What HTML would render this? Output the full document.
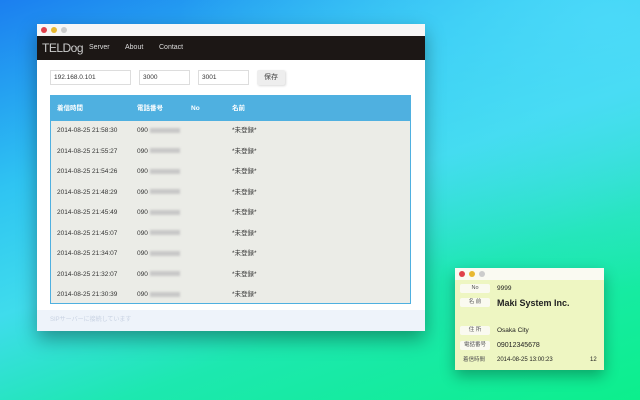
<!DOCTYPE html>
<html><head><meta charset="utf-8"><style>
*{margin:0;padding:0;box-sizing:border-box}
body{width:640px;height:400px;overflow:hidden;position:relative;font-family:"Liberation Sans","Noto Sans CJK JP",sans-serif;
background:linear-gradient(160deg,#1b7ff0 0%,#2fc4f2 30%,#3fdcec 50%,#1de8b0 70%,#0cef8c 100%);}
.bg2{position:absolute;inset:0;background:radial-gradient(ellipse at 95% 5%,rgba(80,220,250,.8),rgba(80,220,250,0) 50%)}
.win{position:absolute;left:37px;top:24px;width:388px;height:307px;background:#fff;box-shadow:0 8px 18px rgba(0,0,0,.35)}
.tb{height:12px;background:#f6f6f6;position:relative}
.dot{position:absolute;top:3px;width:6px;height:6px;border-radius:50%}
.nav{position:absolute;top:12px;left:0;right:0;height:24px;background:#1c1715;color:#ddd;font-size:7px}
.nav .b{position:absolute;left:5px;top:5px;font-size:12px;line-height:14px;color:#ccc;letter-spacing:-.5px}
.nav span{position:absolute;top:7px;line-height:10px}
.in{position:absolute;top:46px;height:15px;border:1px solid #ddd;font-size:6.5px;line-height:13px;padding:0 3px;color:#333;background:#fff}
.btn{position:absolute;top:46px;left:220px;width:28px;height:15px;background:#eee;border-radius:2px;font-size:7px;color:#444;text-align:center;line-height:15px;box-shadow:1px 1px 2px rgba(0,0,0,.15)}
.tbl{position:absolute;left:13px;top:71px;width:361px;height:209px;border:1px solid #4fb0e0;background:#ebece7}
.th{height:25px;background:#4fb0e0;color:#fff;font-size:6.5px;font-weight:bold;position:relative;line-height:25px}
.th span,.r span{position:absolute;top:0}
.r{height:20.5px;position:relative;font-size:6.5px;color:#333;line-height:20px}
.blur{display:inline-block;width:30px;height:5px;background:#c8c8c8;filter:blur(1px);vertical-align:middle}
.ft{position:absolute;left:0;right:0;top:286px;height:21px;background:#eef3fa;font-size:6px;line-height:21px;color:#c8d2e2;padding:0 13px}
.sw{position:absolute;left:455px;top:268px;width:149px;height:102px;background:#eef6c2;box-shadow:0 6px 14px rgba(0,0,0,.3);font-size:6.5px;color:#222}
.sw .tb{background:#fafaf2}
.lab{position:absolute;left:5px;width:30px;height:9px;background:#fafaf0;border-radius:2px;font-size:5.5px;text-align:center;line-height:9px;color:#555}
.v{position:absolute;left:42px;line-height:10px}
</style></head><body><div class="bg2"></div>
<div class="win">
<div class="tb"><div class="dot" style="left:4px;background:#e0404a"></div><div class="dot" style="left:14px;background:#e8b830"></div><div class="dot" style="left:24px;background:#ccc"></div></div>
<div class="nav"><div class="b">TELDog</div><span style="left:52px">Server</span><span style="left:88px">About</span><span style="left:122px">Contact</span></div>
<div class="in" style="left:13px;width:81px">192.168.0.101</div>
<div class="in" style="left:102px;width:51px">3000</div>
<div class="in" style="left:161px;width:51px">3001</div>
<div class="btn">保存</div>
<div class="tbl">
<div class="th"><span style="left:6px">着信時間</span><span style="left:86px">電話番号</span><span style="left:140px">No</span><span style="left:181px">名前</span></div>
<div class="r"><span style="left:6px">2014-08-25 21:58:30</span><span style="left:86px">090 <i class="blur"></i></span><span style="left:181px">*未登録*</span></div>
<div class="r"><span style="left:6px">2014-08-25 21:55:27</span><span style="left:86px">090 <i class="blur"></i></span><span style="left:181px">*未登録*</span></div>
<div class="r"><span style="left:6px">2014-08-25 21:54:26</span><span style="left:86px">090 <i class="blur"></i></span><span style="left:181px">*未登録*</span></div>
<div class="r"><span style="left:6px">2014-08-25 21:48:29</span><span style="left:86px">090 <i class="blur"></i></span><span style="left:181px">*未登録*</span></div>
<div class="r"><span style="left:6px">2014-08-25 21:45:49</span><span style="left:86px">090 <i class="blur"></i></span><span style="left:181px">*未登録*</span></div>
<div class="r"><span style="left:6px">2014-08-25 21:45:07</span><span style="left:86px">090 <i class="blur"></i></span><span style="left:181px">*未登録*</span></div>
<div class="r"><span style="left:6px">2014-08-25 21:34:07</span><span style="left:86px">090 <i class="blur"></i></span><span style="left:181px">*未登録*</span></div>
<div class="r"><span style="left:6px">2014-08-25 21:32:07</span><span style="left:86px">090 <i class="blur"></i></span><span style="left:181px">*未登録*</span></div>
<div class="r"><span style="left:6px">2014-08-25 21:30:39</span><span style="left:86px">090 <i class="blur"></i></span><span style="left:181px">*未登録*</span></div>
</div>
<div class="ft">SIPサーバーに接続しています</div>
</div>
<div class="sw">
<div class="tb"><div class="dot" style="left:4px;background:#e0404a"></div><div class="dot" style="left:14px;background:#e8b830"></div><div class="dot" style="left:24px;background:#ccc"></div></div>
<div class="lab" style="top:16px">No</div><div class="v" style="top:16px">9999</div>
<div class="lab" style="top:30px">名 前</div><div class="v" style="top:29px;font-size:9px;line-height:12px;font-weight:bold">Maki System Inc.</div>
<div class="lab" style="top:58px">住 所</div><div class="v" style="top:58px">Osaka City</div>
<div class="lab" style="top:73px">電話番号</div><div class="v" style="top:73px;font-size:7px">09012345678</div>
<div class="v" style="top:87px;left:8px;font-size:5.5px;color:#555">着信時間</div><div class="v" style="top:87px;font-size:6px">2014-08-25 13:00:23</div><div class="v" style="top:87px;left:135px;font-size:6px">12</div>
</div>
</body></html>
